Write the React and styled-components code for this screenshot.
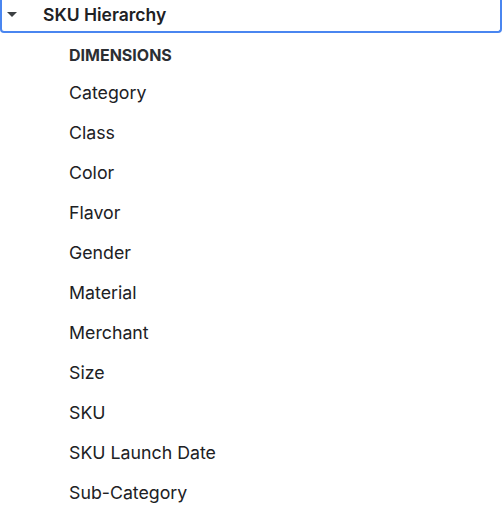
import styled, { createGlobalStyle } from 'styled-components';

const GlobalStyle = createGlobalStyle`
  html, body {
    margin: 0;
    padding: 0;
    background: #fff;
  }
  body {
    font-family: Inter, "Liberation Sans", Arial, sans-serif;
    color: #202124;
  }
`;

const Panel = styled.div`
  width: 504px;
`;

const Header = styled.div`
  box-sizing: border-box;
  width: 502px;
  height: 33px;
  display: flex;
  align-items: center;
  border: 2px solid #4a86f0;
  border-top: none;
  border-radius: 0 0 4px 4px;
  padding-left: 5px;
`;

const Caret = styled.span`
  width: 0;
  height: 0;
  border-left: 5px solid transparent;
  border-right: 5px solid transparent;
  border-top: 5px solid #3c4043;
  margin-right: 26px;
  margin-top: -2px;
`;

const Title = styled.span`
  font-size: 17.5px;
  font-weight: 600;
  color: #202124;
  margin-top: -3px;
`;

const List = styled.div`
  display: flex;
  flex-direction: column;
  padding-left: 69px;
`;

const Heading = styled.div`
  font-size: 16px;
  font-weight: 700;
  line-height: 20px;
  color: #2b2e33;
  padding: 12px 0 7px;
`;

const Item = styled.div`
  height: 40px;
  display: flex;
  align-items: center;
  font-size: 17.75px;
  color: #202124;
  padding-top: 1px;
  box-sizing: border-box;
`;

const dimensions = [
  'Category',
  'Class',
  'Color',
  'Flavor',
  'Gender',
  'Material',
  'Merchant',
  'Size',
  'SKU',
  'SKU Launch Date',
  'Sub-Category',
];

const App = () => (
  <>
    <GlobalStyle />
    <Panel>
      <Header>
        <Caret />
        <Title>SKU Hierarchy</Title>
      </Header>
      <List>
        <Heading>DIMENSIONS</Heading>
        {dimensions.map((d) => (
          <Item key={d}>{d}</Item>
        ))}
      </List>
    </Panel>
  </>
);

export default App;
